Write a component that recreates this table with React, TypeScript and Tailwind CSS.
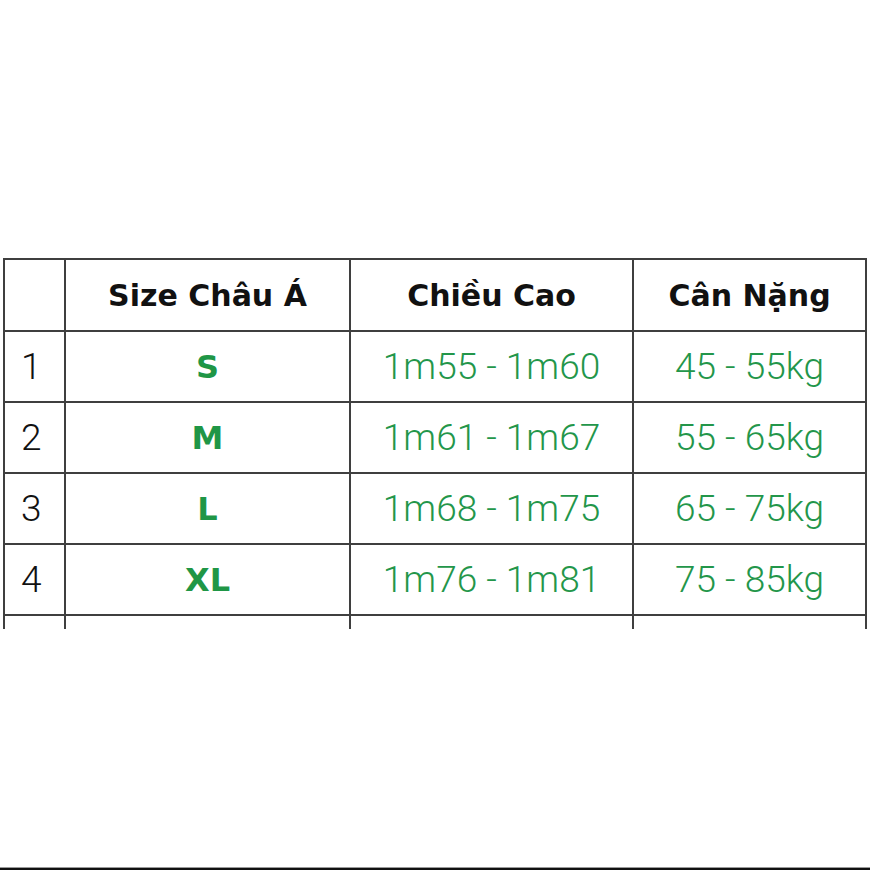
const rows = [
  { n: "1", size: "S", height: "1m55 - 1m60", weight: "45 - 55kg" },
  { n: "2", size: "M", height: "1m61 - 1m67", weight: "55 - 65kg" },
  { n: "3", size: "L", height: "1m68 - 1m75", weight: "65 - 75kg" },
  { n: "4", size: "XL", height: "1m76 - 1m81", weight: "75 - 85kg" },
];

const cell = "border-2 border-[#3f3f3f] p-0";
const head = "font-['DejaVu_Sans',sans-serif] text-[30px] font-bold text-[#111] text-center";
const data = "font-['Roboto',sans-serif] text-[37px] font-light text-[#23964a] text-center";

export default function App() {
  return (
    <div className="flex h-[870px] w-[870px] flex-col bg-white">
      <div className="pl-[3px] pt-[258px]">
        <table className="w-[862px] table-fixed border-collapse">
          <colgroup>
            <col className="w-[61px]" />
            <col className="w-[285px]" />
            <col className="w-[283px]" />
            <col className="w-[233px]" />
          </colgroup>
          <thead>
            <tr className="h-[72px]">
              <th className={cell}></th>
              <th className={`${cell} ${head}`}>Size Châu Á</th>
              <th className={`${cell} ${head}`}>Chiều Cao</th>
              <th className={`${cell} ${head}`}>Cân Nặng</th>
            </tr>
          </thead>
          <tbody>
            {rows.map((r) => (
              <tr key={r.n} className="h-[71px]">
                <td className={`${cell} pl-[16px] font-['Roboto',sans-serif] text-[37px] font-light text-[#111]`}>
                  {r.n}
                </td>
                <td className={`${cell} font-['DejaVu_Sans',sans-serif] text-[32px] font-bold text-[#1f9646] text-center`}>
                  {r.size}
                </td>
                <td className={`${cell} ${data}`}>{r.height}</td>
                <td className={`${cell} ${data}`}>{r.weight}</td>
              </tr>
            ))}
            <tr className="h-[14px]">
              <td className="border-x-2 border-t-2 border-[#3f3f3f] p-0"></td>
              <td className="border-x-2 border-t-2 border-[#3f3f3f] p-0"></td>
              <td className="border-x-2 border-t-2 border-[#3f3f3f] p-0"></td>
              <td className="border-x-2 border-t-2 border-[#3f3f3f] p-0"></td>
            </tr>
          </tbody>
        </table>
      </div>
      <div className="mt-auto h-[3px] w-full border-t border-[#9a9a9a] bg-[#111]"></div>
    </div>
  );
}
